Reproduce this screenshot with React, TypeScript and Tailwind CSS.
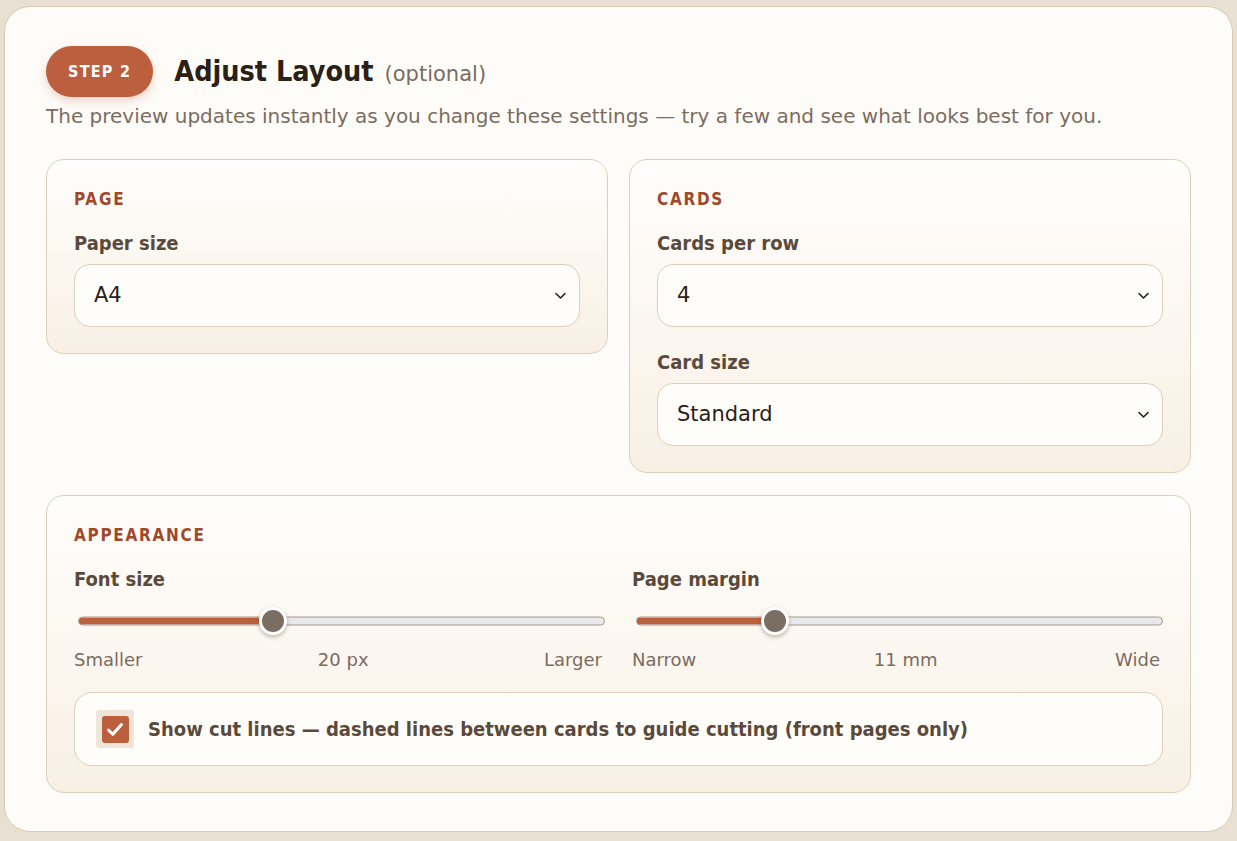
import React from "react";

const REG = "font-['DejaVu_Sans',sans-serif]";
const COND = "font-['DejaVu_Sans_Condensed','DejaVu_Sans',sans-serif]";

function Chevron() {
  return (
    <svg
      className="pointer-events-none absolute right-[14px] top-1/2 -translate-y-1/2"
      width="11"
      height="7"
      viewBox="0 0 11 7"
      fill="none"
    >
      <path d="M1 1l4.5 4.5L10 1" stroke="#2b2016" strokeWidth="1.6" strokeLinecap="round" strokeLinejoin="round" />
    </svg>
  );
}

function Select({ value, options }: { value: string; options: string[] }) {
  return (
    <div className="relative">
      <select
        defaultValue={value}
        className={
          REG +
          " h-[63px] w-full appearance-none rounded-[16px] border border-[#dccfbb] bg-[#fffdf9] pl-[19px] pr-[40px] text-[21px] text-[#2b2016] outline-none"
        }
      >
        {options.map((o) => (
          <option key={o}>{o}</option>
        ))}
      </select>
      <Chevron />
    </div>
  );
}

function Card({ title, children }: { title: string; children: React.ReactNode }) {
  return (
    <div className="rounded-[18px] border border-[#dccfbb] bg-gradient-to-b from-[#fffefc] to-[#f8f0e5] px-[27px] pb-[26px] pt-[28px]">
      <div className={COND + " text-[17px] font-bold leading-[22px] tracking-[0.1em] text-[#a0482a]"}>{title}</div>
      {children}
    </div>
  );
}

function Label({ children, className = "" }: { children: React.ReactNode; className?: string }) {
  return <div className={COND + " text-[20px] font-bold leading-[28px] text-[#5b4a3b] " + className}>{children}</div>;
}

function Slider({ pct }: { pct: number }) {
  return (
    <div className="relative mt-[13px] h-[30px]">
      <div className="absolute left-[4px] right-0 top-1/2 h-[9px] -translate-y-1/2 overflow-hidden rounded-full border border-[#a39a92] bg-[#e9e8ea]">
        <div className="h-full bg-[#bb5f3d]" style={{ width: `${pct}%` }} />
      </div>
      <div
        className="absolute top-1/2 h-[28px] w-[28px] -translate-x-1/2 -translate-y-1/2 rounded-full border-[3px] border-white bg-[#7a6e62] shadow-[0_2px_4px_rgba(80,60,40,0.35)]"
        style={{ left: `calc(4px + ${pct}% * 0.995)` }}
      />
    </div>
  );
}

function SliderBlock({ label, pct, left, mid, right }: { label: string; pct: number; left: string; mid: string; right: string }) {
  return (
    <div>
      <Label>{label}</Label>
      <Slider pct={pct} />
      <div className={REG + " mt-[10px] flex justify-between text-[18px] leading-[28px] text-[#7b6c5f]"}>
        <span>{left}</span>
        <span>{mid}</span>
        <span className="pr-[3px]">{right}</span>
      </div>
    </div>
  );
}

export default function App() {
  return (
    <div className={REG + " min-h-[841px] bg-[#e8e0d3] px-[4px] pb-[8px] pt-[6px]"}>
      <div className="rounded-[26px] border border-[#d8cbb6] bg-[#fefcf8] px-[41px] pb-[38px] pt-[39px]">
        <div className="flex items-center gap-[21px]">
          <div
            className={
              COND +
              " flex h-[51px] items-center rounded-full bg-[#bc5f3e] px-[22px] text-[16px] font-bold tracking-[0.08em] text-white shadow-[0_4px_10px_rgba(188,95,62,0.25)]"
            }
          >
            STEP 2
          </div>
          <div className="flex items-baseline gap-[11px] pt-[2px]">
            <span className={COND + " text-[28.5px] font-bold text-[#2b2016]"}>Adjust Layout</span>
            <span className="text-[21px] text-[#7b6c5f]">(optional)</span>
          </div>
        </div>
        <p className="mt-[5px] text-[20px] leading-[28px] text-[#7b6c5f]">
          The preview updates instantly as you change these settings — try a few and see what looks best for you.
        </p>

        <div className="mt-[29px] grid grid-cols-2 items-start gap-x-[21px] gap-y-[22px]">
          <Card title="PAGE">
            <Label className="mb-[7px] mt-[19px]">Paper size</Label>
            <Select value="A4" options={["A4", "Letter", "Legal", "A5"]} />
          </Card>
          <Card title="CARDS">
            <Label className="mb-[7px] mt-[19px]">Cards per row</Label>
            <Select value="4" options={["2", "3", "4", "5", "6"]} />
            <Label className="mb-[7px] mt-[21px]">Card size</Label>
            <Select value="Standard" options={["Small", "Standard", "Large"]} />
          </Card>
          <div className="col-span-2">
            <Card title="APPEARANCE">
              <div className="mt-[19px] grid grid-cols-2 gap-x-[27px]">
                <SliderBlock label="Font size" pct={37} left="Smaller" mid="20 px" right="Larger" />
                <SliderBlock label="Page margin" pct={26.3} left="Narrow" mid="11 mm" right="Wide" />
              </div>
              <label className="mt-[18px] flex h-[74px] items-center gap-[14px] rounded-[18px] border border-[#dccfbb] bg-[#fffdf9] px-[21px]">
                <span className="flex h-[38px] w-[38px] items-center justify-center rounded-[3px] bg-[#eee5d9]">
                  <span className="flex h-[27px] w-[27px] items-center justify-center rounded-[3px] bg-[#bc5f3e]">
                    <svg width="18" height="15" viewBox="0 0 18 15" fill="none">
                      <path d="M2.5 8l4.3 4.3L15.5 2.5" stroke="white" strokeWidth="3" strokeLinecap="round" strokeLinejoin="round" />
                    </svg>
                  </span>
                </span>
                <span className={COND + " text-[20px] font-bold text-[#5b4a3b]"}>
                  Show cut lines — dashed lines between cards to guide cutting (front pages only)
                </span>
              </label>
            </Card>
          </div>
        </div>
      </div>
    </div>
  );
}
